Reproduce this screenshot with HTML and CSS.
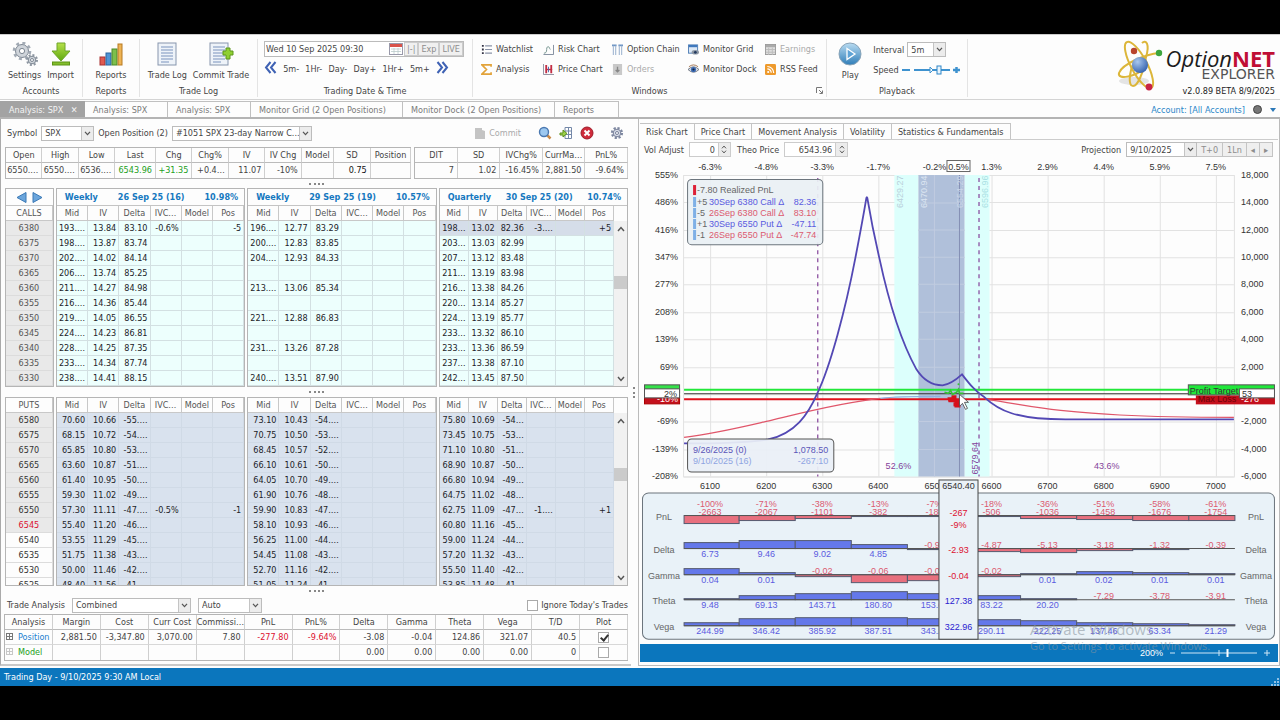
FILE: index.html
```html
<!DOCTYPE html>
<html lang="en">
<head>
<meta charset="utf-8">
<title>OptionNET Explorer</title>
<link rel="stylesheet" href="styles.css">
</head>
<body>
<svg class="defs" width="0" height="0" aria-hidden="true">
  <defs>
    <linearGradient id="gBall" x1="0" y1="0" x2="0" y2="1"><stop offset="0" stop-color="#b9dcf2"/><stop offset="1" stop-color="#2f7db8"/></linearGradient>
    <radialGradient id="gAtom" cx=".35" cy=".3" r=".8"><stop offset="0" stop-color="#a9c8ee"/><stop offset="1" stop-color="#2c5aa8"/></radialGradient>
    <linearGradient id="gGreen" x1="0" y1="0" x2="0" y2="1"><stop offset="0" stop-color="#b6e04a"/><stop offset="1" stop-color="#5fa80f"/></linearGradient>
    <symbol id="chev" viewBox="0 0 8 6"><path d="M1 1l3 3.4L7 1" fill="none" stroke="#555" stroke-width="1.5"/></symbol>
    <symbol id="doc" viewBox="0 0 24 24"><rect x="3" y="1" width="18" height="22" fill="#eef3f9" stroke="#8796ad"/><path d="M6 5h12M6 8h12M6 11h12M6 14h12M6 17h12M6 20h8" stroke="#7b93bd"/></symbol>
  </defs>
</svg>
<div class="app">
  <header class="ribbon">
    <section class="group g-accounts">
      <div class="group-body">
        <button class="big"><svg viewBox="0 0 26 24"><circle cx="10" cy="9" r="6.5" fill="#cfd4da" stroke="#7d8793"/><circle cx="10" cy="9" r="8" fill="none" stroke="#a3abb5" stroke-width="2.6" stroke-dasharray="3 3.3"/><circle cx="10" cy="9" r="2.6" fill="#fff" stroke="#7d8793"/><circle cx="20" cy="18" r="3.8" fill="#cfd4da" stroke="#7d8793"/><circle cx="20" cy="18" r="5" fill="none" stroke="#8c95a0" stroke-width="2" stroke-dasharray="2 1.9"/><circle cx="20" cy="18" r="1.5" fill="#fff" stroke="#7d8793"/></svg>Settings</button>
        <button class="big"><svg viewBox="0 0 26 24"><path d="M9 1h8v8h5l-9 10L4 9h5z" fill="url(#gGreen)" stroke="#6ea52a"/><rect x="4.500" y="20" width="17" height="3" fill="#83bd2b" stroke="#5d9416"/></svg>Import</button>
      </div>
      <h2>Accounts</h2>
    </section>
    <section class="group g-reports">
      <div class="group-body">
        <button class="big"><svg viewBox="0 0 26 24"><rect x="2" y="15" width="5" height="8" fill="#e05a50" stroke="#a33"/><rect x="8" y="11" width="5" height="12" fill="#4f94d4" stroke="#2a64a0"/><rect x="14" y="7" width="5" height="16" fill="#7cbf4c" stroke="#4b8a28"/><rect x="20" y="2" width="4" height="21" fill="#eeb354" stroke="#b77a22"/></svg>Reports</button>
      </div>
      <h2>Reports</h2>
    </section>
    <section class="group g-log">
      <div class="group-body">
        <button class="big"><svg viewBox="0 0 24 24"><use href="#doc"/></svg>Trade Log</button>
        <button class="big"><svg viewBox="0 0 26 24"><use href="#doc" x="-1" width="24" height="24"/><path d="M15 6h3V3h4v3h3v4h-3v4h-4v-4h-3z" transform="translate(0 3)" fill="#8fd032" stroke="#5c961a"/></svg>Commit Trade</button>
      </div>
      <h2>Trade Log</h2>
    </section>
    <section class="group g-date">
      <div class="group-body stack">
        <div class="datebox">
          <input type="text" aria-label="Trading date" value="Wed 10 Sep 2025 09:30">
          <button class="cal" aria-label="Calendar"><svg width="14" height="12" viewBox="0 0 14 12"><rect x=".5" y=".5" width="13" height="11" fill="#fff" stroke="#99a"/><rect x="1" y="1" width="12" height="3" fill="#d9534a"/><path d="M2 6h10M2 8.500h10M5 5v6M9 5v6" stroke="#bcc" stroke-width=".8"/></svg></button>
          <button class="flat">|-|</button><button class="flat">Exp</button><button class="flat">LIVE</button>
        </div>
        <div class="steps">
          <button aria-label="Back"><svg width="13" height="13" viewBox="0 0 13 13"><path d="M6.500 1L2 6.500 6.500 12M11.500 1L7 6.500l4.500 5.500" fill="none" stroke="#3f62b4" stroke-width="2"/></svg></button>
          <button>5m-</button><button>1Hr-</button><button>Day-</button><button>Day+</button><button>1Hr+</button><button>5m+</button>
          <button aria-label="Forward"><svg width="13" height="13" viewBox="0 0 13 13"><path d="M1.500 1L6 6.500 1.500 12M6.500 1L11 6.500 6.500 12" fill="none" stroke="#3f62b4" stroke-width="2"/></svg></button>
        </div>
      </div>
      <h2>Trading Date &amp; Time</h2>
    </section>
    <section class="group g-windows">
      <div class="group-body wins">
        <button><svg viewBox="0 0 12 12"><path d="M1 2h2M1 6h2M1 10h2" stroke="#334" stroke-width="2"/><path d="M4.500 2H12M4.500 6H12M4.500 10H12" stroke="#8a93a8" stroke-width="1.200"/></svg>Watchlist</button>
        <button><svg viewBox="0 0 12 12"><path d="M.5 11.500h11V1" fill="none" stroke="#7a8698"/><path d="M1 10c2 0 3-1 3-4s1-3 2-3 1 2 2 3" fill="none" stroke="#6f8f8a"/></svg>Risk Chart</button>
        <button><svg viewBox="0 0 12 12"><path d="M0 1.500h5M7 1.500h5" stroke="#6d94c4" stroke-width="2"/><path d="M1.500 2v10M4 2v10M8 2v10M10.500 2v10" stroke="#a9bdd6" stroke-width="1.300"/></svg>Option Chain</button>
        <button><svg viewBox="0 0 12 12"><rect x=".5" y="1" width="10" height="9" fill="#dce8f5" stroke="#4e7db5"/><rect x="1" y="1" width="9" height="2.500" fill="#3f78bd"/><ellipse cx="8" cy="9" rx="4" ry="2.500" fill="#8d97a3"/><circle cx="8" cy="9" r="1.500" fill="#233a60"/></svg>Monitor Grid</button>
        <button disabled><svg viewBox="0 0 12 12"><rect x=".5" y=".5" width="11" height="11" fill="#ddd" stroke="#999"/><rect x="1" y="1" width="10" height="2.500" fill="#aaa"/><path d="M1 6h10M1 9h10M4 4v8M8 4v8" stroke="#bbb"/></svg>Earnings</button>
        <button><svg viewBox="0 0 12 12"><path d="M11 3V1H1l5 5-5 5h10V9" fill="none" stroke="#e2a33a" stroke-width="1.800"/></svg>Analysis</button>
        <button><svg viewBox="0 0 12 12"><path d="M.5 0v11.500H12" fill="none" stroke="#889"/><path d="M3.500 1v9M9 1v9" stroke="#c22e44" stroke-width="2"/><path d="M3 6h7" stroke="#c22e44" stroke-width="1.500"/><path d="M6 3v6" stroke="#4668b0"/></svg>Price Chart</button>
        <button disabled><svg viewBox="0 0 12 12"><rect x="1" y="0" width="10" height="12" fill="#c9c9c9"/><path d="M6 3v5M4 6.500l2 2 2-2" fill="none" stroke="#888" stroke-width="1.500"/></svg>Orders</button>
        <button><svg viewBox="0 0 12 12"><path d="M0 6q6-6 12 0-6 6-12 0z" fill="#d8dce4" stroke="#6b7380"/><circle cx="6" cy="6" r="2.800" fill="#3a6ab4"/><circle cx="6" cy="6" r="1.200" fill="#14233e"/><path d="M1 3q5-4 10 0" fill="none" stroke="#a0714a"/></svg>Monitor Dock</button>
        <button><svg viewBox="0 0 12 12"><rect width="12" height="12" rx="1.500" fill="#ee9a2c"/><circle cx="3.500" cy="8.700" r="1.200" fill="#fff"/><path d="M2.500 5.300a4.300 4.300 0 0 1 4.300 4.300M2.500 2.700a7 7 0 0 1 7 7" fill="none" stroke="#fff" stroke-width="1.300"/></svg>RSS Feed</button>
      </div>
      <h2>Windows</h2>
      <svg class="launcher" width="7" height="7" viewBox="0 0 7 7"><path d="M.5 6V.5H6M3 3l3 3M6.500 3.500v3h-3" fill="none" stroke="#777"/></svg>
    </section>
    <section class="group g-play">
      <div class="group-body">
        <button class="big"><svg viewBox="0 0 24 24"><circle cx="12" cy="12" r="11" fill="url(#gBall)" stroke="#8aa4b8"/><path d="M9 6.500l8 5.500-8 5.500z" fill="#5ea3d6" stroke="#fff" stroke-width="1.300"/></svg>Play</button>
        <div class="playopts">
          <div class="line"><label for="interval">Interval</label><span class="combo c-int"><select id="interval"><option>5m</option></select><svg class="chev"><use href="#chev"/></svg></span></div>
          <div class="line"><span>Speed</span><svg class="speed" width="58" height="10" viewBox="0 0 58 10"><path d="M0 5h8M12 5h36" stroke="#3e92cf" stroke-width="2"/><path d="M28 2l3 3-3 3z" fill="#fff" stroke="#3e92cf"/><rect x="35" y="1" width="4" height="8" fill="#e8f4fc" stroke="#2f86c8"/><path d="M54.500 2v6M51 5h7" stroke="#3e92cf" stroke-width="2.500"/></svg></div>
        </div>
      </div>
      <h2>Playback</h2>
    </section>
    <div class="brand">
      <svg width="50" height="54" viewBox="0 0 50 54"><ellipse cx="18" cy="41" rx="15" ry="4" fill="#e4e4e4"/><g fill="none" stroke="#dcb63a" stroke-width="2"><ellipse cx="23" cy="25" rx="8" ry="26" transform="rotate(-28 23 25)"/><path d="M26 3C30 -1 34 4 30 17C27 33 22 46 17 46C12 46 13 33 18 22"/><path d="M43 13C30 14 6 24 3 33c-2 7 16 4 24-4"/></g><circle cx="24" cy="25" r="8" fill="url(#gAtom)"/><circle cx="18" cy="11" r="3.200" fill="#b8442e"/><circle cx="43" cy="13" r="3.200" fill="#3da53d"/><circle cx="33" cy="47" r="3.400" fill="#c92445"/></svg>
      <div class="brand-text">
        <div class="brand-name"><i>Option</i><b>NET</b></div>
        <div class="brand-sub">EXPLORER</div>
        <div class="brand-ver">v2.0.89 BETA 8/9/2025</div>
      </div>
    </div>
  </header>

  <nav class="doctabs">
    <button class="active dt1">Analysis: SPX <span>✕</span></button>
    <button class="dt2">Analysis: SPX</button>
    <button class="dt2">Analysis: SPX</button>
    <button class="dt3">Monitor Grid (2 Open Positions)</button>
    <button class="dt3">Monitor Dock (2 Open Positions)</button>
    <button class="dt4">Reports</button>
    <div class="account"><a href="#account">Account: [All Accounts]</a><i class="dot"></i><i class="tri"></i></div>
  </nav>

  <main class="main">
    <section class="left">
      <div class="symbolbar">
        <label for="sym">Symbol</label>
        <span class="combo c-sym"><select id="sym"><option>SPX</option></select><svg class="chev"><use href="#chev"/></svg></span>
        <label for="pos">Open Position (2)</label>
        <span class="combo c-pos"><select id="pos"><option>#1051 SPX 23-day Narrow C...</option></select><svg class="chev"><use href="#chev"/></svg></span>
        <div class="tools">
          <button disabled><svg width="12" height="12" viewBox="0 0 12 12"><path d="M1 1h7v2l3 1v8H1z" fill="#c4c4c4"/></svg>Commit</button>
          <button aria-label="Search"><svg width="14" height="14" viewBox="0 0 14 14"><path d="M9 9l3.500 3.500" stroke="#c88a4a" stroke-width="2.500"/><circle cx="6" cy="6" r="4.500" fill="#9cc8f0" stroke="#4a78b0" stroke-width="1.400"/></svg></button>
          <button aria-label="Add column"><svg width="14" height="14" viewBox="0 0 14 14"><path d="M6 1.500h6.500v11H6zM9.500 1.500v11M6 5h6M6 8.500h6" fill="#fff" stroke="#7488a8"/><path d="M1 7h3V4l4 3.500L4 11V9H1z" fill="#9bd04a" stroke="#5c901c"/></svg></button>
          <button aria-label="Close"><svg width="14" height="14" viewBox="0 0 14 14"><circle cx="7" cy="7" r="6" fill="#cf2b3b" stroke="#9d1a28"/><path d="M4.500 4.500l5 5M9.500 4.500l-5 5" stroke="#fff" stroke-width="2"/></svg></button>
          <button class="gear" aria-label="Options"><svg width="14" height="14" viewBox="0 0 14 14"><circle cx="7" cy="7" r="5" fill="none" stroke="#7d87a0" stroke-width="2.200" stroke-dasharray="2.200 1.700"/><circle cx="7" cy="7" r="3.800" fill="#d6dbe6" stroke="#77809a"/><circle cx="7" cy="7" r="1.500" fill="#fff" stroke="#77809a"/></svg></button>
        </div>
      </div>

      <div class="quotes">
        <table class="grid q1">
          <colgroup><col style="width:9%"><col style="width:9%"><col style="width:9%"><col style="width:10%"><col style="width:9%"><col style="width:9%"><col style="width:9%"><col style="width:9%"><col style="width:8%"><col style="width:9%"><col style="width:10%"></colgroup>
          <thead><tr><th>Open</th><th>High</th><th>Low</th><th>Last</th><th>Chg</th><th>Chg%</th><th>IV</th><th>IV Chg</th><th>Model</th><th>SD</th><th>Position</th></tr></thead>
          <tbody><tr><td>6550.…</td><td>6550.…</td><td>6536.…</td><td class="up">6543.96</td><td class="up">+31.35</td><td>+0.4…</td><td>11.07</td><td>-10%</td><td></td><td class="dark">0.75</td><td></td></tr></tbody>
        </table>
        <table class="grid q2">
          <thead><tr><th>DIT</th><th>SD</th><th>IVChg%</th><th>CurrMa…</th><th>PnL%</th></tr></thead>
          <tbody><tr><td>7</td><td>1.02</td><td>-16.45%</td><td>2,881.50</td><td>-9.64%</td></tr></tbody>
        </table>
      </div>
      <div class="grip"></div>
      <div class="chains calls" id="calls"></div>
      <div class="grip"></div>
      <div class="chains puts" id="puts"></div>
      <div class="grip"></div>

      <div class="tradebar">
        <span>Trade Analysis</span>
        <span class="combo c-comb"><select aria-label="Trade analysis mode"><option>Combined</option></select><svg class="chev"><use href="#chev"/></svg></span>
        <span class="combo c-auto"><select aria-label="Trade analysis type"><option>Auto</option></select><svg class="chev"><use href="#chev"/></svg></span>
        <label class="ignore"><input type="checkbox">Ignore Today's Trades</label>
      </div>
      <table class="grid trades">
        <thead><tr><th>Analysis</th><th>Margin</th><th>Cost</th><th>Curr Cost</th><th>Commissi…</th><th>PnL</th><th>PnL%</th><th>Delta</th><th>Gamma</th><th>Theta</th><th>Vega</th><th>T/D</th><th>Plot</th></tr></thead>
        <tbody>
          <tr><td class="name pos"><i class="exp"></i>Position</td><td>2,881.50</td><td>-3,347.80</td><td>3,070.00</td><td>7.80</td><td class="down">-277.80</td><td class="down">-9.64%</td><td>-3.08</td><td>-0.04</td><td>124.86</td><td>321.07</td><td>40.5</td><td class="mid"><input type="checkbox" checked aria-label="Plot position"></td></tr>
          <tr><td class="name mod"><i class="exp off"></i>Model</td><td></td><td></td><td></td><td></td><td></td><td></td><td>0.00</td><td>0.00</td><td>0.00</td><td>0.00</td><td>0</td><td class="mid"><input type="checkbox" aria-label="Plot model"></td></tr>
        </tbody>
      </table>
    </section>

    <div class="splitter"></div>

    <section class="right">
      <nav class="charttabs">
        <button class="active">Risk Chart</button><button>Price Chart</button><button>Movement Analysis</button><button>Volatility</button><button>Statistics &amp; Fundamentals</button>
      </nav>
      <div class="chartbar">
        <label for="vol">Vol Adjust</label>
        <span class="spin s-vol"><input id="vol" type="text" value="0"><i><svg><use href="#chev"/></svg><svg><use href="#chev"/></svg></i></span>
        <label for="theo">Theo Price</label>
        <span class="spin s-theo"><input id="theo" type="text" value="6543.96"><i><svg><use href="#chev"/></svg><svg><use href="#chev"/></svg></i></span>
        <label class="proj" for="proj">Projection</label>
        <span class="projset"><span class="combo c-proj"><select id="proj"><option>9/10/2025</option></select><svg class="chev"><use href="#chev"/></svg></span><button>T+0</button><button>1Ln</button><button>◂</button><button>▸</button></span>
      </div>
      <svg class="chart" viewBox="640 158 637 484" role="img" aria-label="Risk chart">
        <g class="grid-lines" id="gridlines"></g>
        <rect x="894" y="175" width="24" height="301" fill="#dcfffc"/>
        <rect x="964" y="175" width="25" height="301" fill="#dcfffc"/>
        <rect x="918" y="175" width="46" height="301" fill="#b0c0da"/>
        <path d="M934 175v301M918 203h46M918 230h46M918 257h46M918 284h46M918 312h46M918 339h46M918 367h46M918 421h46M918 449h46" stroke="#c0cbe0"/>
        <path d="M959 175v301" stroke="#8590b4"/>
        <path d="M817.500 178v298M978.500 178v298" stroke="#84439a" stroke-width="1.200" stroke-dasharray="4 4" fill="none"/>
        <path d="M684 389.500H1233" stroke="#22e83a" stroke-width="2"/>
        <path d="M684 393.500H1233" stroke="#333"/>
        <path d="M684 399H1233" stroke="#e0101c" stroke-width="2"/>
        <path d="M684 437C715 433 740 427 766 421S840 402 880 398" fill="none" stroke="#e0566a" stroke-width="1.200"/>
        <path d="M880 398C895 396 910 396 940 396" fill="none" stroke="#8fb0e0" stroke-width="1.200"/>
        <path d="M985 399C1010 402 1030 407 1060 410S1130 417 1233 417" fill="none" stroke="#e0566a" stroke-width="1.200"/>
        <path d="M684 443C730 443 750 442 768 439C795 433 808 414 817 393C830 366 845 310 855 258C860 232 864 210 866 198Q866.500 196 867 198C869 210 873 232 879 258C888 300 901 342 916 369C923 380 933 385 942 385C950 384 956 379 961.500 374C970 385 975 391 984 397C998 410 1015 419 1065 419H1233" fill="none" stroke="#5348b4" stroke-width="1.800"/>
        <g fill="#d6101c"><path d="M947 397h4v-2h5v4h4v8h-6v-5h-6z"/><rect x="953" y="402" width="3" height="4"/></g>
        <path d="M944 392l4 1 2-3 2 4 4-2 2-3 1 4h4" fill="none" stroke="#35c335" stroke-width="1.700"/><circle cx="958" cy="384" r="1" fill="#35c335"/>
        <path d="M959 394l0 12 3-3 3 6 2-1-3-6h4z" fill="#fff" stroke="#444" stroke-width=".8"/>

        <g id="axes"></g>
        <rect x="946.500" y="160.500" width="23" height="11" fill="#fff" stroke="#666"/>
        <text class="t mid" x="958" y="170">0.5%</text>

        <g class="vert">
          <text transform="translate(903 208) rotate(-90)" fill="#b9cfdb">6429.27</text>
          <text transform="translate(927 208) rotate(-90)" fill="#dde6f2">6470.94</text>
          <text transform="translate(963 208) rotate(-90)" fill="#cbd6e8">6554.29</text>
          <text transform="translate(987 208) rotate(-90)" fill="#aadfe3">6596.96</text>
          <text transform="translate(977 474) rotate(-90)" fill="#84439a">6579.64</text>
        </g>
        <text class="t mid" x="898" y="469" fill="#84439a">52.6%</text>
        <text class="t mid" x="1106" y="469" fill="#84439a">43.6%</text>

        <rect x="644.500" y="384.500" width="35" height="8" fill="#35e24a" stroke="#555"/>
        <rect x="644.500" y="395.500" width="35" height="8" fill="#c4101c" stroke="#a00"/>
        <text class="t end" x="678" y="402" fill="#fff">-10%</text>
        <rect x="644.500" y="388.500" width="35" height="9" fill="#fff" stroke="#555"/>
        <text class="t end" x="677" y="397">2%</text>
        <rect x="1195" y="395" width="79" height="9" fill="#c4101c"/>
        <text class="t" x="1197" y="402" fill="#6e0008">Max Loss</text>
        <text class="t" x="1240" y="402" fill="#fff">-276</text>
        <rect x="1187.500" y="384.500" width="86" height="10" fill="#20e83a" stroke="#555"/>
        <text class="t" x="1189" y="394">Profit Target</text>
        <rect x="1238.500" y="388.500" width="35" height="9" fill="#fff" stroke="#555"/>
        <text class="t" x="1241" y="397">53</text>

        <rect x="687.500" y="179.500" width="135" height="65" rx="4" fill="#e9f0f4" fill-opacity=".93" stroke="#6c757d"/>
        <rect x="693" y="185" width="3" height="10" fill="#dd2036"/>
        <path d="M694.500 197v43" stroke="#7fb0e6" stroke-width="3" stroke-dasharray="10 1"/>
        <text class="t" x="697" y="193" fill="#666">-7.80 Realized PnL</text>
        <g id="legs"></g>

        <rect x="687.500" y="438.500" width="146" height="33" rx="4" fill="#e9eff6" fill-opacity=".93" stroke="#555"/>
        <text class="t" x="693" y="453" fill="#5a55b8">9/26/2025 (0)</text><text class="t end" x="828" y="453" fill="#5a55b8">1,078.50</text>
        <text class="t" x="693" y="464" fill="#8fa5e2">9/10/2025 (16)</text><text class="t end" x="828" y="464" fill="#8fa5e2">-267.10</text>

        <rect x="642.500" y="492.500" width="631" height="146" rx="6" fill="#e9f2f8" stroke="#6c757d"/>
        <g id="greeks"></g>
        <rect x="938.500" y="479.500" width="39" height="159" fill="#eaf1f7" stroke="#444"/>
        <text class="t mid" x="958" y="489" fill="#333">6540.40</text>
        <g class="mid red"><text class="t" x="958" y="515">-267</text><text class="t" x="958" y="527">-9%</text><text class="t" x="958" y="552">-2.93</text><text class="t" x="958" y="578">-0.04</text></g>
        <g class="mid blue"><text class="t" x="958" y="603">127.38</text><text class="t" x="958" y="629">322.96</text></g>
      </svg>
      <div class="zoombar"><span>200%</span><svg width="100" height="10" viewBox="0 0 100 10"><path d="M0 5h5M11 5h76M49 2v6M94 5h6M97 2v6" stroke="#cfe6f6"/><path d="M57.500 1v8" stroke="#fff" stroke-width="2"/></svg></div>
      <div class="watermark"><p>Activate Windows</p><small>Go to Settings to activate Windows.</small></div>
    </section>
  </main>

  <footer class="status"><span>Trading Day - 9/10/2025 9:30 AM Local</span><svg width="8" height="8" viewBox="0 0 8 8"><path d="M6 0h2v2H6zM3 3h2v2H3zM6 3h2v2H6zM0 6h2v2H0zM3 6h2v2H3zM6 6h2v2H6z" fill="#8fc0e4"/></svg></footer>
</div>
<script src="app.js"></script>
</body>
</html>
```

FILE: styles.css
```css
* { box-sizing: border-box; }
body {
  margin: 0;
  min-height: 100vh;
  padding: 34px 0 35px;
  background: #000;
  display: flex;
  font: 9px/12px "DejaVu Sans Condensed", "DejaVu Sans", "Open Sans", sans-serif;
  color: #444;
}
.defs { position: absolute; }
button, input, select { font: inherit; color: inherit; margin: 0; }
button { padding: 0; border: 0; background: none; white-space: nowrap; }
h2, p { margin: 0; font: inherit; }
svg { flex: none; }
.app { flex: 1; min-width: 0; display: flex; flex-direction: column; background: #fdfdfd; border-top: 1px solid #ccc; }

/* ribbon */
.ribbon { display: flex; height: 65px; padding-top: 4px; border-bottom: 1px solid #d4d4d4; }
.group { position: relative; display: flex; flex-direction: column; border-right: 1px solid #e4e4e4; margin-bottom: 2px; }
.group h2 { text-align: center; }
.group-body { display: flex; flex: 1; padding-top: 3px; justify-content: center; align-items: flex-start; }
.g-accounts { width: 83px; }
.g-reports { width: 57px; }
.g-log { width: 118px; }
.g-date { width: 215px; }
.g-windows { width: 354px; }
.g-play { width: 141px; }
.big { display: flex; flex-direction: column; align-items: center; gap: 3px; padding: 0 3px; }
.big svg { width: 26px; height: 24px; }
.g-play .group-body { gap: 7px; }
.group-body.stack { flex-direction: column; align-items: stretch; justify-content: flex-start; padding: 2px 8px 0 6px; gap: 4px; }
.datebox { display: flex; height: 16px; border: 1px solid #bbb; background: #fff; }
.datebox input { flex: 1; min-width: 0; border: 0; padding: 0 1px; background: none; }
.cal { width: 17px; display: flex; align-items: center; justify-content: center; }
.flat { padding: 0 2px; border: 1px solid #ccc; background: #f0f0f0; color: #8d8d8d; line-height: 12px; }
.steps { display: flex; justify-content: space-between; align-items: center; padding: 0 15px 0 0; }
.group-body.wins { display: grid; grid-template-columns: 62px 69px 76px 77px 60px; grid-auto-rows: 20px; padding: 0 0 0 8px; justify-content: start; }
.wins button { display: flex; align-items: center; gap: 4px; height: 20px; }
.wins svg { width: 11px; height: 11px; }
button:disabled { color: #aaa; }
.launcher { position: absolute; right: 3px; bottom: 3px; }
.playopts { display: flex; flex-direction: column; gap: 5px; }
.line { display: flex; align-items: center; gap: 3px; height: 15px; }

.combo { position: relative; display: inline-flex; height: 15px; border: 1px solid #bcbcbc; background: #fff; }
.combo select { appearance: none; flex: 1; width: 100%; border: 0; background: none; padding: 0 12px 0 3px; border-radius: 0; }
.chev { position: absolute; right: 0; top: 0; width: 12px; height: 13px; padding: 4px 2px; background: #ececec; border-left: 1px solid #c4c4c4; pointer-events: none; }
.c-int { width: 39px; }
.brand { margin-left: auto; display: flex; padding-right: 5px; }
.brand > svg { margin: 1px 0 0 0; }
.brand-text { text-align: right; color: #1c1c1c; font-family: "Open Sans", sans-serif; padding-top: 7px; }
.brand-name { font-size: 22px; line-height: 24px; white-space: nowrap; }
.brand-name b { color: #c00f35; }
.brand-sub { font: 14px/12px "DejaVu Sans", sans-serif; color: #555; margin-top: -2px; }
.brand-ver { font: 9px/12px "DejaVu Sans Condensed", "DejaVu Sans", sans-serif; margin-top: 5px; }

/* document tabs */
.doctabs { display: flex; align-items: flex-end; height: 19px; padding-top: 2px; border-bottom: 2px solid #b4b4b4; }
.doctabs button { height: 16px; border: 1px solid #c0c0c0; border-left: 0; border-bottom: 0; text-align: left; padding: 0 8px; color: #7a7a7a; line-height: 14px; overflow: hidden; }
.doctabs .active { background: #a3a3a3; border-color: #a3a3a3; color: #f4f4f4; padding-left: 9px; padding-right: 0; }
.doctabs .active span { margin-left: 5px; }
.dt1 { width: 85px; }
.dt2 { width: 83px; }
.dt3 { width: 152px; }
.dt4 { width: 64px; }
.account { margin-left: auto; display: flex; align-items: center; gap: 8px; align-self: center; padding-right: 4px; }
.account a { color: #2b86c8; text-decoration: none; }
.dot { width: 9px; height: 9px; border-radius: 50%; background: #777; border: 1px solid #444; }
.tri { border: 3px solid transparent; border-top: 4px solid #2b78b8; border-bottom: 0; }

/* main panels */
.main { flex: 1; display: flex; min-width: 0; }
.left { flex: none; width: 49.3%; padding: 6px 3px 3px 3px; border-left: 1px solid #aaa; border-bottom: 2px solid #c9c9c9; display: flex; flex-direction: column; }
.right { flex: 1; min-width: 0; position: relative; border-left: 1px solid #bbb; border-right: 1px solid #bbb; border-bottom: 1px solid #bbb; padding: 4px 1px 3px 1px; display: flex; flex-direction: column; }
.splitter { width: 7px; display: flex; align-items: center; }
.splitter::after { content: ""; height: 11px; border-left: 2px dotted #888; margin-left: 2px; }
.symbolbar { display: flex; align-items: center; height: 16px; padding: 0 3px; gap: 4px; }
.c-sym { width: 53px; }
.c-pos { width: 140px; }
.tools { margin-left: auto; display: flex; align-items: center; gap: 7px; }
.tools button { display: flex; align-items: center; gap: 3px; }
.tools button:first-child { margin-right: 10px; }
.tools .gear { margin-left: 9px; margin-right: 1px; }

.grid { border-collapse: separate; border-spacing: 0; table-layout: fixed; width: 100%; border: 1px solid #b5b5b5; border-right: 0; }
.grid th, .grid td { height: 15px; padding: 0 3px 0 0; border-right: 1px solid #cfcfcf; border-bottom: 1px solid #d8d8d8; font-weight: normal; white-space: nowrap; overflow: hidden; line-height: 13px; text-align: right; }
.grid th { padding: 0; text-align: center; border-bottom-color: #bbb; }
.grid tbody tr:last-child td { border-bottom: 0; }
.up { color: #22a022; }
.grid .down { color: #dc1030; }
.dark { color: #111; }
.quotes { display: flex; gap: 3px; margin: 6px 0 0 1px; }
.quotes .q1 { flex: 406; width: 0; }
.quotes .q2 { flex: 213; width: 0; }
.grip { height: 10px; display: flex; justify-content: center; align-items: center; }
.quotes + .grip { height: 9px; }
.grip::after { content: ""; width: 15px; border-top: 2px dotted #888; }

/* option chains */
.chains { display: grid; grid-template-columns: 49fr 190fr 190fr 190fr; gap: 2px; margin-left: 1px; color: #1c2228; }
.chains > div { border: 1px solid #b5b5b5; overflow: hidden; min-width: 0; position: relative; }
.calls > div { height: 199px; }
.puts > div { height: 189px; }
.title { display: flex; justify-content: space-between; align-items: center; height: 17px; padding: 0 6px 0 8px; color: #1578c0; font-weight: bold; border-bottom: 1px solid #c4c4c4; }
.title.nav { justify-content: center; gap: 5px; padding: 0; }
.chain { border-collapse: separate; border-spacing: 0; table-layout: fixed; width: 100%; }
.chain th, .chain td { height: 15px; padding: 0 2px 0 0; font-weight: normal; white-space: nowrap; overflow: hidden; text-align: right; line-height: 13px; border-right: 1px solid #d3e0e2; border-bottom: 1px solid #d3e0e2; }
.chain th { padding: 0; text-align: center; color: #555; border-color: #c8c8c8; }
.chain td { background: #edfffd; }
.puts .chain td { background: #d9e2ee; border-color: #d0dae6; }
.chains .hl td { background: #d5dde9; }
.chain.strikes td, .puts .chain.strikes td { background: #e9e9e9; text-align: center; padding: 0; color: #555; border-color: #dcdcdc; }
.puts .chain.strikes td { color: #333; }
.puts .chain.strikes .atm { color: #dc1030; }
.puts .chain.strikes .otm { background: #fdfdfd; }
.with-bar { display: grid; grid-template-columns: 1fr 13px; align-items: start; }
.calls .with-bar { height: 180px; grid-template-rows: 180px; }
.puts .with-bar { height: 187px; grid-template-rows: 187px; }
.bar { align-self: stretch; background: #f1f1f1; margin-top: 15px; display: flex; flex-direction: column; align-items: center; padding: 5px 0 4px; }
.bar svg { width: 8px; height: 6px; }
.bar svg:first-child { transform: rotate(180deg); }
.bar i { width: 100%; height: 13px; background: #cbcbcb; margin: 44px 0 auto; }

.tradebar { display: flex; align-items: center; height: 18px; gap: 7px; padding-left: 3px; }
.c-comb { width: 119px; }
.c-auto { width: 64px; }
.ignore { margin-left: auto; display: flex; align-items: center; gap: 3px; }
input[type=checkbox] { appearance: none; width: 11px; height: 11px; border: 1px solid #aaa; background: #fff; display: block; }
input[type=checkbox]:checked::after { content: ""; display: block; width: 3px; height: 6px; margin: 0 0 0 3px; border: solid #333; border-width: 0 2px 2px 0; transform: rotate(40deg); }
.trades .name { text-align: left; padding-left: 1px; }
.trades .mid { padding: 0; }
.trades .mid input { margin: 0 auto; }
.pos { color: #1c7fd0; }
.mod { color: #22a022; }
.exp { display: inline-block; width: 7px; height: 7px; margin-right: 5px; border: 1px solid #777; background: linear-gradient(#777, #777) center / 5px 1px no-repeat, linear-gradient(#777, #777) center / 1px 5px no-repeat; }
.exp.off { opacity: .4; }

/* chart side */
.charttabs { display: flex; height: 17px; border-bottom: 1px solid #ccc; }
.charttabs button { padding: 0 6px; border: 1px solid #c4c4c4; border-left: 0; border-bottom: 0; height: 16px; line-height: 14px; }
.charttabs .active { background: #fdfdfd; height: 17px; }
.chartbar { display: flex; align-items: center; height: 17px; margin-top: 1px; padding: 0 5px 0 4px; gap: 5px; }
.spin { display: flex; height: 15px; border: 1px solid #ccc; background: #fff; }
.spin input { flex: 1; min-width: 0; border: 0; padding: 0 3px; text-align: right; background: none; }
.spin i { width: 12px; display: flex; flex-direction: column; justify-content: space-evenly; align-items: center; background: #ececec; border-left: 1px solid #ccc; }
.spin svg { width: 6px; height: 4px; }
.spin svg:first-child { transform: rotate(180deg); }
.s-vol { width: 42px; margin-right: 1px; }
.s-theo { width: 64px; }
.proj { margin-left: auto; }
.projset { display: flex; height: 15px; }
.c-proj { width: 71px; }
.projset button { border: 1px solid #c4c4c4; border-left: 0; background: #efefef; padding: 0 4px; color: #8d8d8d; line-height: 12px; }
.chart { display: block; width: 100%; height: auto; font-family: "Liberation Sans", Arial, sans-serif; font-size: 9px; fill: #333; }
.chart .grid-lines { stroke: #e2e2e2; fill: none; }
.mid { text-anchor: middle; }
.end { text-anchor: end; }
.chart .red { fill: #dc1030; }
.chart .blue { fill: #2a22d0; }
.chart .rose { fill: #dc5a70; }
.chart .indigo { fill: #5a5ae0; }
.chart .name { fill: #666; }
.zoombar { flex: 1; min-height: 18px; margin-top: 1px; background: #0b76bd; color: #fff; display: flex; align-items: center; justify-content: flex-end; gap: 7px; padding-right: 8px; font-family: "Liberation Sans", Arial, sans-serif; }
.watermark { position: absolute; right: 61px; bottom: 12px; width: 188px; color: rgba(140, 150, 160, .6); font-family: "Open Sans", sans-serif; white-space: nowrap; pointer-events: none; }
.watermark p { font-size: 15px; line-height: 20px; }
.watermark small { display: block; font-size: 11px; line-height: 14px; }

.status { display: flex; justify-content: space-between; align-items: center; height: 18px; margin-top: 2px; padding: 0 1px 0 4px; background: #0b76bd; color: #fff; }
.status svg { align-self: flex-end; }
```

FILE: app.js
```js
const heads = ['Mid', 'IV', 'Delta', 'IVC…', 'Model', 'Pos'];

const calls = {
  strikes: [6380, 6375, 6370, 6365, 6360, 6355, 6350, 6345, 6340, 6335, 6330],
  chains: [
    { title: ['Weekly', '26 Sep 25 (16)', '10.98%'], rows: [
      '193.…|13.84|83.10|-0.6%||-5', '198.…|13.87|83.74', '202.…|14.02|84.14', '206.…|13.74|85.25',
      '211.…|14.27|84.98', '216.…|14.36|85.44', '219.…|14.05|86.55', '224.…|14.23|86.81',
      '228.…|14.25|87.35', '233.…|14.34|87.74', '238.…|14.41|88.15'] },
    { title: ['Weekly', '29 Sep 25 (19)', '10.57%'], rows: [
      '196.…|12.77|83.29', '200.…|12.83|83.85', '204.…|12.93|84.33', '', '213.…|13.06|85.34', '',
      '221.…|12.88|86.83', '', '231.…|13.26|87.28', '', '240.…|13.51|87.90'] },
    { title: ['Quarterly', '30 Sep 25 (20)', '10.74%'], hl: 0, rows: [
      '198…|13.02|82.36|-3.…||+5', '203…|13.03|82.99', '207…|13.12|83.48', '211…|13.19|83.98',
      '216…|13.38|84.26', '220…|13.14|85.27', '224…|13.19|85.77', '233…|13.32|86.10',
      '233…|13.36|86.59', '237…|13.38|87.10', '242…|13.45|87.50'] }
  ]
};

const puts = {
  strikes: [6580, 6575, 6570, 6565, 6560, 6555, 6550, 6545, 6540, 6535, 6530, 6525],
  chains: [
    { rows: ['70.60|10.66|-55.…', '68.15|10.72|-54.…', '65.85|10.80|-53.…', '63.60|10.87|-51.…',
      '61.40|10.95|-50.…', '59.30|11.02|-49.…', '57.30|11.11|-47.…|-0.5%||-1', '55.40|11.20|-46.…',
      '53.55|11.29|-45.…', '51.75|11.38|-43.…', '50.00|11.46|-42.…', '48.40|11.56|-41.…'] },
    { rows: ['73.10|10.43|-54.…', '70.75|10.50|-53.…', '68.45|10.57|-52.…', '66.10|10.61|-50.…',
      '64.05|10.70|-49.…', '61.90|10.76|-48.…', '59.90|10.83|-47.…', '58.10|10.93|-46.…',
      '56.25|11.00|-44.…', '54.45|11.08|-43.…', '52.70|11.16|-42.…', '51.05|11.24|-41.…'] },
    { rows: ['75.80|10.69|-54…', '73.45|10.75|-53…', '71.10|10.80|-51…', '68.90|10.87|-50…',
      '66.80|10.94|-49…', '64.75|11.02|-48…', '62.75|11.09|-47…|-1.…||+1', '60.80|11.16|-45…',
      '59.00|11.24|-44…', '57.20|11.32|-43…', '55.50|11.40|-42…', '53.85|11.48|-41…'] }
  ]
};

function buildChains(id, label, data) {
  const arrow = d => `<svg width="11" height="11" viewBox="0 0 11 11"><path d="${d}" fill="#6aa5dc" stroke="#3a78b4"/></svg>`;
  const nav = data.chains[0].title
    ? `<div class="title nav">${arrow('M10 .5v10L1 5.500z')}${arrow('M1 .5v10l9-5z')}</div>` : '';
  const strikes = data.strikes.map(s => {
    const cls = label === 'PUTS' ? (s === 6545 ? 'atm' : s < 6545 ? 'otm' : '') : '';
    return `<tr><td class="${cls}">${s}</td></tr>`;
  }).join('');
  let html = `<div>${nav}<table class="chain strikes"><thead><tr><th>${label}</th></tr></thead><tbody>${strikes}</tbody></table></div>`;

  data.chains.forEach((chain, n) => {
    const title = chain.title ? `<div class="title">${chain.title.map(t => `<span>${t}</span>`).join('')}</div>` : '';
    const rows = chain.rows.map((row, i) => {
      const cells = row.split('|');
      return `<tr class="${chain.hl === i ? 'hl' : ''}">${heads.map((_, c) => `<td>${cells[c] || ''}</td>`).join('')}</tr>`;
    }).join('');
    const table = `<table class="chain"><thead><tr>${heads.map(h => `<th>${h}</th>`).join('')}</tr></thead><tbody>${rows}</tbody></table>`;
    const chev = '<svg><use href="#chev"/></svg>';
    html += n === 2
      ? `<div>${title}<div class="with-bar">${table}<div class="bar">${chev}<i></i>${chev}</div></div></div>`
      : `<div>${title}${table}</div>`;
  });
  document.getElementById(id).innerHTML = html;
}
buildChains('calls', 'CALLS', calls);
buildChains('puts', 'PUTS', puts);

const text = (x, y, s, cls = '') => `<text class="t ${cls}" x="${x}" y="${y}">${s}</text>`;
const plot = { left: 684, right: 1233, top: 175, bottom: 476 };
const tickX = i => Math.round(710 + i * 56.1);
const tickY = i => Math.round(175 + i * 27.36);

const topPct = ['-6.3%', '-4.8%', '-3.3%', '-1.7%', '-0.2%', '1.3%', '2.9%', '4.4%', '5.9%', '7.5%'];
const leftPct = ['555%', '486%', '416%', '347%', '277%', '208%', '139%', '69%', '', '-69%', '-139%', '-208%'];
const rightVal = ['18,000', '14,000', '12,000', '10,000', '8,000', '6,000', '4,000', '2,000', '', '-2,000', '-4,000', '-6,000'];
let lines = '', axes = '';
topPct.forEach((p, i) => {
  lines += `<path d="M${tickX(i) + 0.5} ${plot.top}V${plot.bottom}"/>`;
  axes += text(tickX(i), 170, p, 'mid') + text(tickX(i), 489, 6100 + i * 100, 'mid');
});
leftPct.forEach((p, i) => {
  lines += `<path d="M${plot.left} ${tickY(i) + 0.5}H${plot.right}"/>`;
  axes += text(678, tickY(i) + 3, p, 'end') + text(1240, tickY(i) + 3, rightVal[i]);
});
lines += `<rect x="683.5" y="175.5" width="550" height="301"/>`;
document.getElementById('gridlines').innerHTML = lines;
document.getElementById('axes').innerHTML = axes;

const legs = [
  ['+5', '30Sep 6380 Call Δ', '82.36', 'indigo'], ['-5', '26Sep 6380 Call Δ', '83.10', 'rose'],
  ['+1', '30Sep 6550 Put Δ', '-47.11', 'indigo'], ['-1', '26Sep 6550 Put Δ', '-47.74', 'rose']
];
document.getElementById('legs').innerHTML = legs.map(([q, name, d, c], i) => {
  const y = 205 + i * 11;
  return text(697, y, q, 'name') + text(709, y, name, c) + text(816, y, d, 'end ' + c);
}).join('');

/* h: bar height per column, positive above the base line */
const greeks = [
  { name: 'PnL', base: 515, h: [-8, -5, -3, -1, -1, -1, -3, -4, -5, -5],
    top: ['-100%', '-71%', '-38%', '-13%', '-7%', '-18%', '-36%', '-51%', '-58%', '-61%'],
    v: ['-2663', '-2067', '-1101', '-382', '-188', '-506', '-1036', '-1458', '-1676', '-1754'] },
  { name: 'Delta', base: 548, h: [6, 8, 8, 4, -1, -3, -4, -2, -1, 0],
    v: ['6.73', '9.46', '9.02', '4.85', '-0.95', '-4.87', '-5.13', '-3.18', '-1.32', '-0.39'] },
  { name: 'Gamma', base: 574, h: [6, 2, -2, -8, -6, -2, 1, 3, 2, 1],
    v: ['0.04', '0.01', '-0.02', '-0.06', '-0.05', '-0.02', '0.01', '0.02', '0.01', '0.01'] },
  { name: 'Theta', base: 599, h: [1, 4, 6, 8, 6, 4, 1, 0, 0, 0],
    v: ['9.48', '69.13', '143.71', '180.80', '153.60', '83.22', '20.20', '-7.29', '-3.78', '-3.91'] },
  { name: 'Vega', base: 625, h: [3, 7, 8, 8, 7, 6, 5, 3, 2, 1],
    v: ['244.99', '346.42', '385.92', '387.51', '343.20', '290.11', '222.25', '137.46', '63.34', '21.29'] }
];
const edges = [684, 739, 795, 851, 907, 963, 1020, 1076, 1132, 1188, 1234];
document.getElementById('greeks').innerHTML = greeks.map(g => {
  let out = text(664, g.base + 4, g.name, 'mid name') + text(1255, g.base + 4, g.name, 'mid name');
  g.h.forEach((h, i) => {
    const w = edges[i + 1] - edges[i];
    if (h) out += `<rect x="${edges[i]}" y="${h > 0 ? g.base - h : g.base}" width="${w}" height="${Math.abs(h)}" fill="${h > 0 ? '#6478ea' : '#e8707e'}" stroke="#555b70" stroke-width="1"/>`;
    const neg = g.v[i][0] === '-';
    const y = g.top ? 514 : neg ? g.base - 1 : g.base + 8;
    out += text(tickX(i), y, g.v[i], 'mid ' + (neg ? 'rose' : 'indigo'));
    if (g.top) out += text(tickX(i), 506, g.top[i], 'mid rose');
  });
  return out + `<path d="M684 ${g.base}H1234" stroke="#555"/>`;
}).join('');
```
